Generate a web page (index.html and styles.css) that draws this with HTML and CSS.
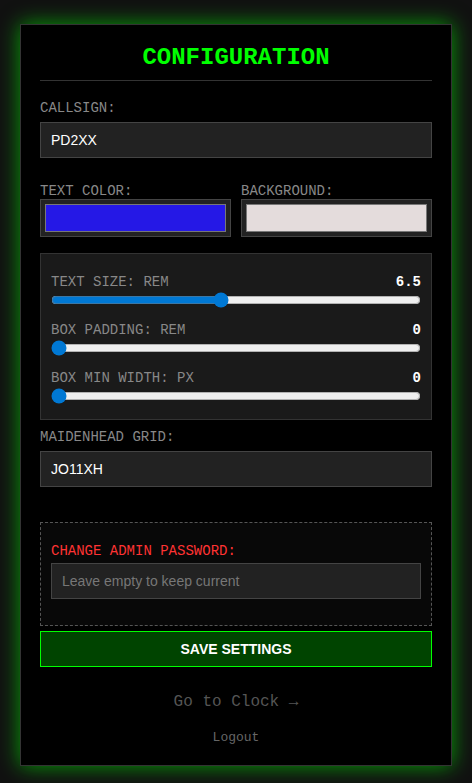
FILE: index.html
```html
<!DOCTYPE html>
<html lang="en">
<head>
    <meta charset="UTF-8">
    <meta name="viewport" content="width=device-width, initial-scale=1.0">
    <title>Configuration</title>
    <link rel="stylesheet" href="styles.css">
</head>
<body>
    <div class="config-container">
        <h1>CONFIGURATION</h1>
        <form id="config-form">
            <div class="form-group">
                <label for="callsign">Callsign:</label>
                <input type="text" id="callsign" name="callsign" value="PD2XX">
            </div>

            <div class="color-row">
                <div class="color-group">
                    <label for="text-color">Text Color:</label>
                    <input type="color" id="text-color" name="text-color" value="#2518e6">
                </div>
                <div class="color-group">
                    <label for="bg-color">Background:</label>
                    <input type="color" id="bg-color" name="bg-color" value="#e4dcdc">
                </div>
            </div>

            <div class="slider-panel">
                <div class="slider-row">
                    <div class="slider-head">
                        <label for="text-size">Text Size: rem</label>
                        <span class="slider-value" id="text-size-val">6.5</span>
                    </div>
                    <input type="range" id="text-size" name="text-size" min="1" max="13" step="0.5" value="6.5">
                </div>
                <div class="slider-row">
                    <div class="slider-head">
                        <label for="box-padding">Box Padding: rem</label>
                        <span class="slider-value" id="box-padding-val">0</span>
                    </div>
                    <input type="range" id="box-padding" name="box-padding" min="0" max="5" step="0.5" value="0">
                </div>
                <div class="slider-row">
                    <div class="slider-head">
                        <label for="box-width">Box Min Width: px</label>
                        <span class="slider-value" id="box-width-val">0</span>
                    </div>
                    <input type="range" id="box-width" name="box-width" min="0" max="1000" step="10" value="0">
                </div>
            </div>

            <div class="form-group grid-group">
                <label for="grid">Maidenhead Grid:</label>
                <input type="text" id="grid" name="grid" value="JO11XH">
            </div>

            <div class="password-box">
                <label for="password">Change Admin Password:</label>
                <input type="password" id="password" name="password" placeholder="Leave empty to keep current">
            </div>

            <button class="btn-save" type="submit">SAVE SETTINGS</button>
        </form>

        <div class="links">
            <a href="#" class="clock-link">Go to Clock &rarr;</a>
            <a href="#" class="logout-link">Logout</a>
        </div>
    </div>

    <script>
        // keep the number next to each slider in sync
        document.querySelectorAll('.slider-row input').forEach(function (slider) {
            const out = document.getElementById(slider.id + '-val');
            slider.addEventListener('input', function () {
                out.textContent = slider.value;
            });
        });
    </script>
</body>
</html>
```

FILE: styles.css
```css
body {
    margin: 0;
    padding: 24px 20px;
    background-color: #111;
    font-family: "Liberation Mono", "Courier New", monospace;
    color: #ccc;
}
.config-container {
    padding: 19px 19px 20px;
    background-color: #000;
    border: 1px solid #333;
    box-shadow: 0 0 20px rgba(0, 255, 0, 0.6);
}
h1 {
    margin: 0 0 19px;
    padding-bottom: 9px;
    border-bottom: 1px solid #333;
    text-align: center;
    color: #00ff00;
    font-size: 24px;
    font-weight: bold;
}
label {
    display: block;
    font-size: 14px;
    line-height: 16px;
    color: #888;
    text-transform: uppercase;
}
.form-group {
    margin-bottom: 25px;
}
.form-group label {
    margin-bottom: 6px;
}
.grid-group {
    margin-bottom: 35px;
}
input[type="text"],
input[type="password"] {
    display: block;
    box-sizing: border-box;
    width: 100%;
    height: 36px;
    margin: 0;
    padding: 0 10px;
    background-color: #222;
    border: 1px solid #444;
    color: #fff;
    font-family: "Liberation Sans", Arial, sans-serif;
    font-size: 14px;
}
input::placeholder {
    color: #777;
}
.color-row {
    display: grid;
    grid-template-columns: 1fr 1fr;
    gap: 10px;
    margin-bottom: 16px;
}
input[type="color"] {
    display: block;
    box-sizing: border-box;
    width: 100%;
    height: 38px;
    margin: 0;
    padding: 4px;
    background-color: #222;
    border: 1px solid #444;
    -webkit-appearance: none;
    appearance: none;
}
input[type="color"]::-webkit-color-swatch-wrapper {
    padding: 0;
}
input[type="color"]::-webkit-color-swatch {
    border: 1px solid #777;
    border-radius: 0;
}
.slider-panel {
    padding: 20px 10px 15px;
    margin-bottom: 9px;
    background-color: #1a1a1a;
    border: 1px solid #333;
}
.slider-row {
    margin-bottom: 14px;
}
.slider-row:last-child {
    margin-bottom: 0;
}
.slider-head {
    display: flex;
    justify-content: space-between;
    margin-bottom: 2px;
}
.slider-value {
    font-size: 14px;
    line-height: 16px;
    font-weight: bold;
    color: #fff;
}
input[type="range"] {
    display: block;
    width: 100%;
    height: 16px;
    margin: 0;
    accent-color: #0078d4;
}
.password-box {
    padding: 20px 10px 26px;
    background-color: #080808;
    border: 1px dashed #555;
}
.password-box label {
    color: #ff3333;
    margin-bottom: 4px;
}
.btn-save {
    display: block;
    width: 100%;
    height: 36px;
    margin-top: 5px;
    background-color: #004400;
    border: 1px solid #00ff00;
    color: #fff;
    font-family: "Liberation Sans", Arial, sans-serif;
    font-size: 14px;
    font-weight: bold;
    cursor: pointer;
}
.links {
    display: flex;
    flex-direction: column;
    align-items: center;
    gap: 19px;
    margin-top: 26px;
}
.links a {
    text-decoration: none;
}
.clock-link {
    font-size: 16px;
    color: #555;
}
.logout-link {
    font-size: 13px;
    color: #666;
}
```
